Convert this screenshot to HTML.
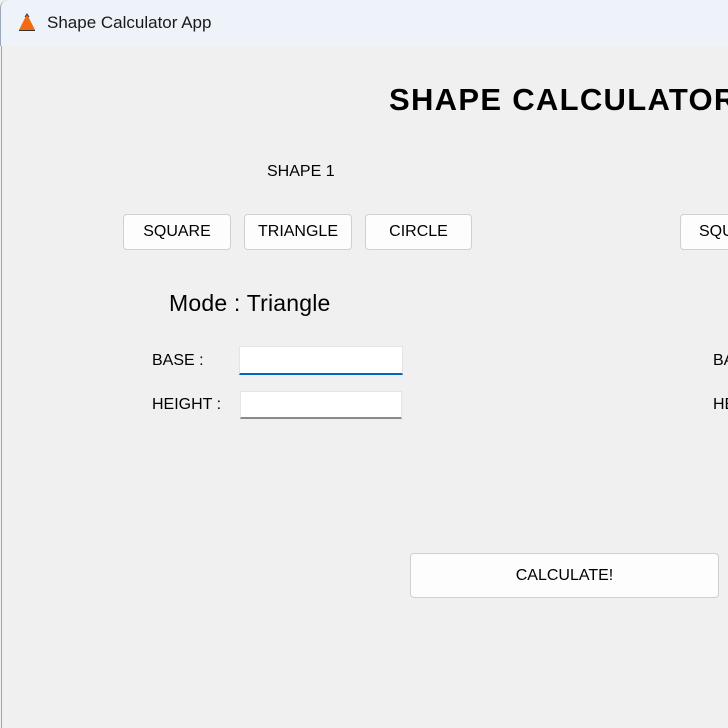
<!DOCTYPE html>
<html><head><style>
body{margin:0;width:728px;height:728px;overflow:hidden;background:#f0f0f0;font-family:"Liberation Sans",sans-serif;position:relative}
#w{position:absolute;left:0;top:0;width:728px;height:728px;overflow:hidden}
.tb{position:absolute;left:0;top:0;width:728px;height:46px;background:#eef3f9;border-top-left-radius:8px;border-left:1px solid #9aa8b8}
.tt{position:absolute;left:46px;top:13px;font-size:17px;color:#1a1a1a}
.main{position:absolute;left:1px;top:46px;right:0;bottom:0;background:#f0f0f0;border-left:1px solid #9aa8b8}
.a{position:absolute;white-space:nowrap;color:#000}
.btn{position:absolute;height:36px;background:#fdfdfd;border:1px solid #d0d0d0;border-radius:4px;box-sizing:border-box;font-size:16px;text-align:center;line-height:34px;overflow:hidden;white-space:nowrap}
.in{position:absolute;background:#fff;border:1px solid #e4e4e4;box-sizing:border-box;border-bottom:2px solid #8a8a8a}
</style></head><body><div id="w">
<div class="tb">
<svg style="position:absolute;left:16px;top:12px" width="20" height="20" viewBox="0 0 20 20"><polygon points="10,2 18,18 2,18" fill="#f36a12"/><polyline points="8,5 10,2 12,5" fill="none" stroke="#333" stroke-width="1"/><line x1="2" y1="18.5" x2="18" y2="18.5" stroke="#333" stroke-width="1"/></svg>
<div class="tt">Shape Calculator App</div>
</div>
<div class="main"></div>
<div class="a" style="left:389px;top:82px;font-size:31px;font-weight:bold;letter-spacing:1.3px">SHAPE CALCULATOR</div>
<div class="a" style="left:267px;top:163px;font-size:16px">SHAPE 1</div>
<div class="btn" style="left:123px;top:214px;width:108px">SQUARE</div>
<div class="btn" style="left:244px;top:214px;width:108px">TRIANGLE</div>
<div class="btn" style="left:365px;top:214px;width:107px">CIRCLE</div>
<div class="btn" style="left:680px;top:214px;width:60px;text-align:left;padding-left:18px">SQUARE</div>
<div class="a" style="left:169px;top:290px;font-size:23px;letter-spacing:0.2px">Mode : Triangle</div>
<div class="a" style="left:152px;top:352px;font-size:16px">BASE :</div>
<div class="a" style="left:152px;top:396px;font-size:16px">HEIGHT :</div>
<div class="a" style="left:713px;top:352px;font-size:16px">BA</div>
<div class="a" style="left:713px;top:396px;font-size:16px">HE</div>
<div class="in" style="left:239px;top:346px;width:164px;height:29px;border-bottom:2px solid #0067c0"></div>
<div class="in" style="left:240px;top:391px;width:162px;height:28px"></div>
<div class="btn" style="left:410px;top:553px;width:309px;height:45px;line-height:43px">CALCULATE!</div>
</div></body></html>
